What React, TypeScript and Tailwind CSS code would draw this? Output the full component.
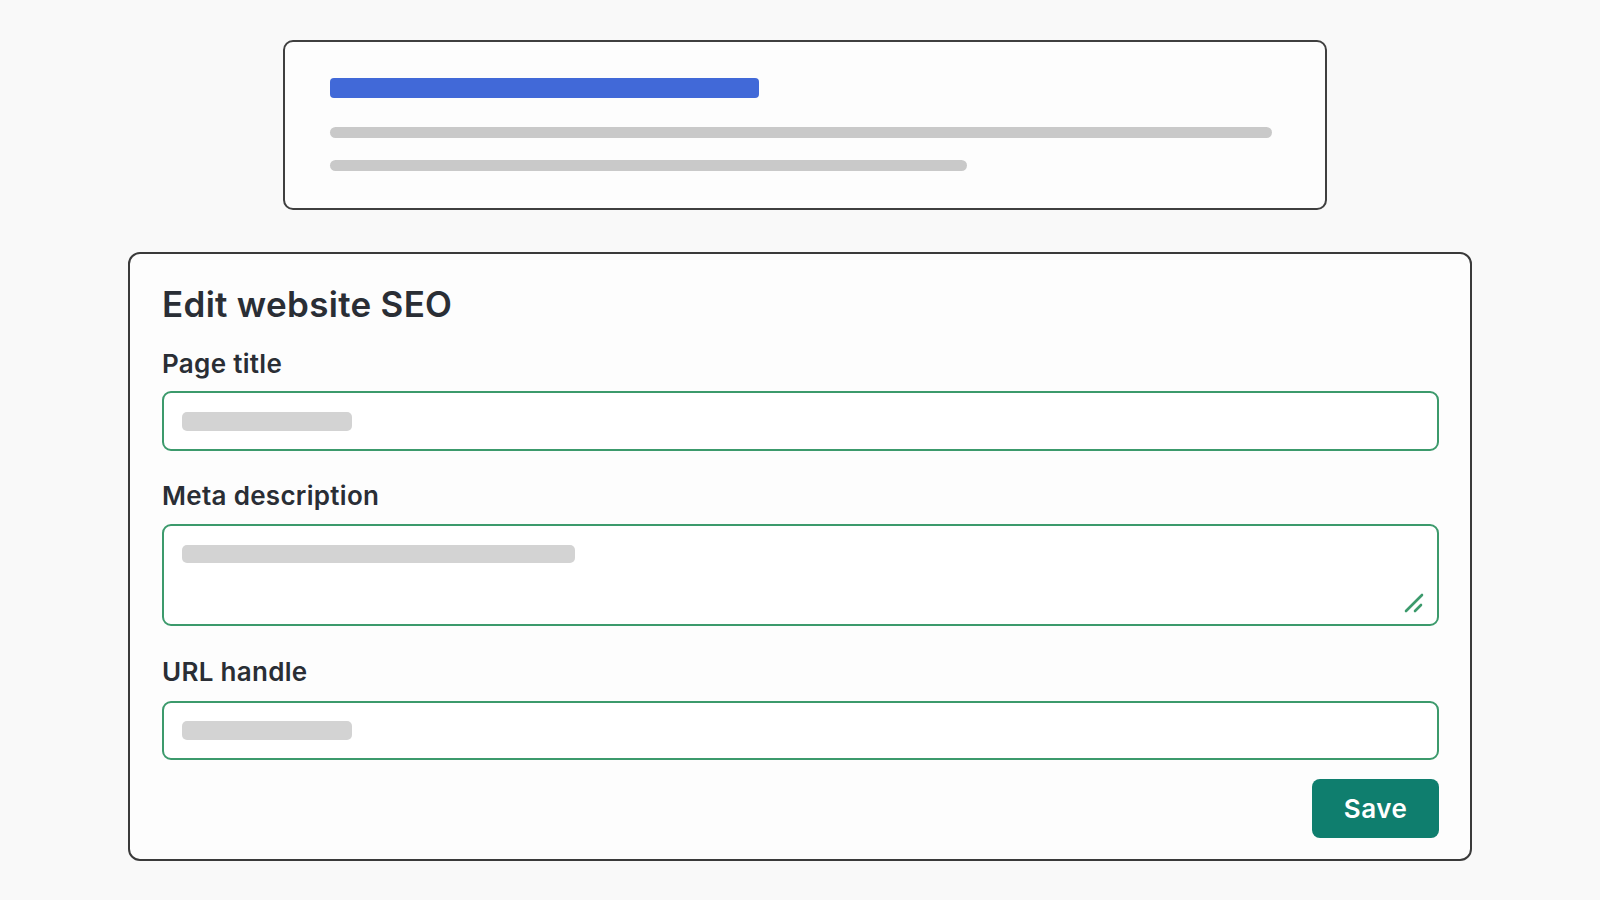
export default function App() {
  return (
    <div
      className="w-[1600px] h-[900px] bg-[#f9f9f9] overflow-hidden"
      style={{ fontFamily: "Inter, 'Noto Sans', sans-serif" }}
    >
      <div className="pt-[40px]">
        {/* Preview card */}
        <div className="ml-[283px] w-[1044px] h-[170px] bg-[#fdfdfd] border-2 border-[#3f3f3f] rounded-[10px] pl-[45px] pt-[36px]">
          <div className="w-[429px] h-[20px] bg-[#4169d8] rounded-[4px]" />
          <div className="mt-[29px] w-[942px] h-[11px] bg-[#c9c9c9] rounded-full" />
          <div className="mt-[22px] w-[637px] h-[11px] bg-[#c9c9c9] rounded-full" />
        </div>

        {/* Form card */}
        <div className="mt-[42px] ml-[128px] w-[1344px] h-[609px] bg-[#fdfdfd] border-2 border-[#3a3a3a] rounded-[12px] pl-[32px] pr-[31px] pt-[30px] pb-[21px] flex flex-col">
          <h1 className="text-[35px] leading-[40px] font-semibold text-[#2a2e35] tracking-[0.3px]">
            Edit website SEO
          </h1>

          <label className="mt-[25px] text-[26px] leading-[30px] font-semibold text-[#2a2e35] tracking-[0.3px]">
            Page title
          </label>
          <div className="mt-[12px] h-[60px] border-2 border-[#3c9a6c] rounded-[9px] bg-white flex items-center pl-[18px]">
            <div className="w-[170px] h-[19px] bg-[#d3d3d3] rounded-[5px]" />
          </div>

          <label className="mt-[30px] text-[26px] leading-[30px] font-semibold text-[#2a2e35] tracking-[0.3px]">
            Meta description
          </label>
          <div className="relative mt-[13px] h-[102px] border-2 border-[#3c9a6c] rounded-[9px] bg-white pl-[18px] pt-[19px]">
            <div className="w-[393px] h-[18px] bg-[#d3d3d3] rounded-[5px]" />
            <svg
              className="absolute right-[12px] bottom-[10px]"
              width="22"
              height="22"
              viewBox="0 0 22 22"
              fill="none"
            >
              <line x1="3" y1="19" x2="19" y2="3" stroke="#3c9a6c" strokeWidth="2.6" strokeLinecap="round" />
              <line x1="12" y1="19" x2="18" y2="13" stroke="#3c9a6c" strokeWidth="2.6" strokeLinecap="round" />
            </svg>
          </div>

          <label className="mt-[31px] text-[26px] leading-[30px] font-semibold text-[#2a2e35] tracking-[0.3px]">
            URL handle
          </label>
          <div className="mt-[14px] h-[59px] border-2 border-[#3c9a6c] rounded-[9px] bg-white flex items-center pl-[18px]">
            <div className="w-[170px] h-[19px] bg-[#d3d3d3] rounded-[5px]" />
          </div>

          <div className="mt-[19px] flex justify-end">
            <button className="w-[127px] h-[59px] bg-[#0f7e6e] rounded-[8px] text-white text-[26px] font-semibold tracking-[0.5px]">
              Save
            </button>
          </div>
        </div>
      </div>
    </div>
  );
}
